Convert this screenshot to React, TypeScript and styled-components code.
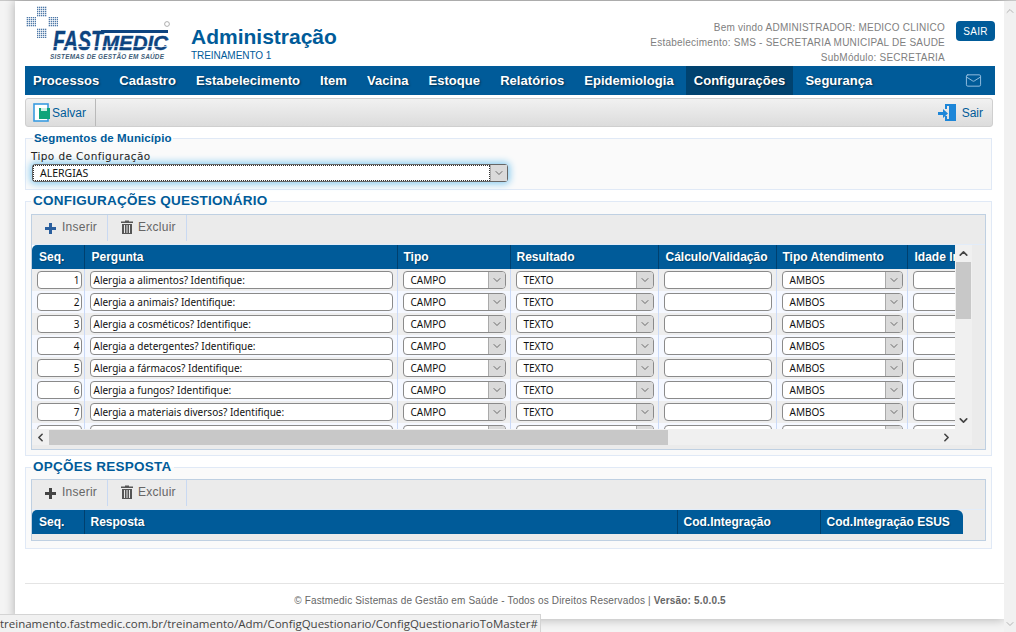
import React from "react";
import styled, { createGlobalStyle } from "styled-components";
import { ChevronDown, ChevronUp, ChevronLeft, ChevronRight, Mail } from "lucide-react";

const BLUE = "#005b99";
const Global = createGlobalStyle`
  html, body { margin: 0; padding: 0; height: 632px; overflow: hidden; background: #f4f4f4; }
  * { box-sizing: border-box; }
  body { font-family: "Liberation Sans", Arial, sans-serif; }
`;
const Shell = styled.div`
  position: relative; display: flex; width: 1016px; height: 632px;
  border-top: 1px solid #c8c8c8; background: #f4f4f4;
`;
const Gutter = styled.div`width: 15px; flex: none;`;
const Page = styled.main`
  width: 989px; height: 618px; flex: none; background: #fff; padding-left: 10px;
  box-shadow: 0 0 10px rgba(0,0,0,.3); position: relative; display: flex; flex-direction: column;
`;
const PageScroll = styled.div`
  width: 12px; flex: none; background: #f1f1f1; display: flex; flex-direction: column;
  justify-content: space-between; align-items: center; padding: 4px 0 2px; color: #b5b5b5; position: relative;
`;
const Head = styled.header`display: flex; width: 970px; height: 65px; flex: none;`;
const LogoBox = styled.div`width: 166px; flex: none; padding-top: 4px;`;
const TitleBox = styled.div`flex: 1; padding-top: 24px;`;
const Title = styled.h1`margin: 0; font-size: 21px; line-height: 24px; font-weight: 700; color: ${BLUE};`;
const Sub = styled.div`font-size: 10px; line-height: 12px; margin-top: 1px; color: ${BLUE}; letter-spacing: -.05px;`;
const Who = styled.div`
  padding-top: 19px; text-align: right; font-size: 10px; line-height: 15px; color: #808080; letter-spacing: .23px;
`;
const HeadBtn = styled.button`
  width: 39px; height: 20px; margin: 20px 0 0 11px; border: 0; border-radius: 4px; background: ${BLUE};
  color: #fff; font: 10px "Liberation Sans", sans-serif; letter-spacing: .3px; padding: 0;
`;
const Nav = styled.nav`
  width: 970px; height: 29px; flex: none; background: ${BLUE}; display: flex; gap: 4px; align-items: stretch; position: relative;
`;
const NavItem = styled.a<{ $active?: boolean }>`
  padding: 0 8px; line-height: 29px; font-size: 13px; letter-spacing: .05px; font-weight: 700; color: #fff;
  text-shadow: 1px 1px 2px rgba(0,0,0,.5); background: ${p => (p.$active ? "#00426f" : "transparent")};
`;
const NavMail = styled.span`margin-left: auto; padding: 6px 13px 0 0; color: #9cc4e4; line-height: 0;`;
const ActionBar = styled.div`
  width: 968px; height: 29px; flex: none; margin-top: 3px; display: flex; align-items: center; justify-content: space-between;
  border: 1px solid #cfcfcf; border-radius: 3px; background: linear-gradient(#f1f1f1, #dcdcdc);
`;
const ActionBtn = styled.span<{ $sep?: boolean }>`
  height: 100%; display: flex; align-items: center; gap: 1px; padding: 0 9px 0 7px; color: ${BLUE}; font-size: 12px;
  border-right: ${p => (p.$sep ? "1px solid #b9b9b9" : "0")};
`;
const Sets = styled.fieldset<{ $h: number; $mt: number }>`
  width: 967px; height: ${p => p.$h}px; flex: none; margin: ${p => p.$mt}px 0 0; padding: 0 5px; min-width: 0;
  background: #fafafa; border: 1px solid #e0e9f6; position: relative;
`;
const Legend = styled.legend<{ $big?: boolean }>`
  padding: 0 ${p => (p.$big ? "2px" : "1px")}; margin-left: ${p => (p.$big ? "0" : "2px")}; color: ${BLUE}; font-weight: 700;
  font-size: ${p => (p.$big ? "13.5px" : "11.500px")}; line-height: ${p => (p.$big ? "14px" : "13px")};
  letter-spacing: ${p => (p.$big ? ".25px" : ".1px")};
`;
const FieldLabel = styled.div`
  font: 10.5px/13px "DejaVu Sans", sans-serif; color: #222; letter-spacing: .4px; margin-top: 5px;
`;
const FocusSelect = styled.div`
  width: 476px; height: 18px; margin: 1px 0 0 1px; display: flex; border-radius: 3px; background: #fff;
  border: 1px solid #666; box-shadow: 0 0 7px 2px #8ccdf0; 
`;
const FocusText = styled.span`
  flex: 1; outline: 1px dotted #333; outline-offset: -1px; font: 10.5px/16px "Noto Sans", sans-serif; padding-left: 7px; color: #111;
`;
const Arrow = styled.span`
  width: 17px; flex: none; display: flex; align-items: center; justify-content: center; background: #dadada; color: #444;
  border-left: 1px solid #aaa;
`;
const Grid = styled.section<{ $h: number; $mt: number }>`
  height: ${p => p.$h}px; margin-top: ${p => p.$mt}px; border: 1px solid #bfd0e2; background: #ebebeb; display: flex; flex-direction: column;
`;
const Tools = styled.div<{ $h: number }>`
  height: ${p => p.$h}px; flex: none; display: flex; align-items: flex-start; border-bottom: 1px solid #e2ecf9;
`;
const Tool = styled.span`
  display: flex; align-items: center; gap: 6px; height: 26px; padding: 0 10px 3px 13px; font-size: 12px; color: #666;
  letter-spacing: .25px; border-right: 1px solid #c9d9f2;
`;
const ScrollRow = styled.div`display: flex; height: 184px; flex: none;`;
const Viewport = styled.div`width: 923px; overflow: hidden; height: 184px; background: #fff;`;
const Table = styled.table<{ $w: number }>`
  width: ${p => p.$w}px; table-layout: fixed; border-collapse: collapse; border-spacing: 0;
`;
const HeadCell = styled.th<{ $w: number; $round?: string; $pad?: number }>`
  width: ${p => p.$w}px; height: 24px; padding: 0 0 0 ${p => p.$pad ?? 6}px; background: ${BLUE}; color: #fff; text-align: left;
  font-size: 12px; font-weight: 700; border-left: 1px solid #00406e; white-space: nowrap; overflow: hidden;
  text-shadow: 1px 1px 1px rgba(0,0,0,.3);
  &:first-child { border-left: 0; border-top-left-radius: 5px; }
  ${p => (p.$round ? `border-top-right-radius: ${p.$round};` : "")}
`;
const Row = styled.tr<{ $odd: boolean }>`background: ${p => (p.$odd ? "#eeeeee" : "#f5f8ff")};`;
const Cell = styled.td`
  height: 22px; padding: 0 4px 0 5px; border-left: 1px solid #c9d9f7; vertical-align: middle;
  &:first-child { border-left: 0; padding: 0 2px 0 5px; }
`;
const Input = styled.div<{ $right?: boolean }>`
  height: 18px; background: #fff; border: 1px solid #8a8a8a; border-radius: 4px; overflow: hidden; white-space: nowrap;
  font: 10px/16px "Noto Sans", sans-serif; color: #111; padding: 0 ${p => (p.$right ? "1px" : "3px")};
  text-align: ${p => (p.$right ? "right" : "left")};
`;
const Sel = styled.div`
  height: 18px; display: flex; background: #fff; border: 1px solid #8a8a8a; border-radius: 4px; overflow: hidden;
`;
const SelText = styled.span`flex: 1; padding-left: 7px; font: 10px/17px "Noto Sans", sans-serif; color: #111;`;
const VBar = styled.div`
  width: 17px; flex: none; background: #f0f0f0; display: flex; flex-direction: column; align-items: center; color: #444;
`;
const VBtn = styled.div`height: 17px; display: flex; align-items: center; justify-content: center;`;
const VThumb = styled.div`width: 15px; height: 57px; background: #c8c8c8;`;
const VRest = styled.div`flex: 1;`;
const HBar = styled.div`
  height: 16px; width: 940px; flex: none; background: #f0f0f0; display: flex; align-items: center; color: #444;
`;
const HBtn = styled.div`width: 17px; height: 16px; display: flex; align-items: center; justify-content: center;`;
const HThumb = styled.div`width: 619px; height: 15px; background: #c8c8c8;`;
const HRest = styled.div`flex: 1;`;
const Footer = styled.footer`
  margin-top: 34px; flex: none; border-top: 1px solid #e4e4e4; height: 36px; padding-top: 11px; width: 979px;
  font-size: 10px; line-height: 12px; color: #666; text-align: center; letter-spacing: .17px; padding-right: 9px;
`;
const Status = styled.div`
  position: absolute; left: 0; bottom: 0; width: 541px; height: 18px; background: #f1f1f1; border: 1px solid #d4d4d4;
  border-left: 0; border-bottom: 0; font: 11.5px/17px "Open Sans", sans-serif; color: #444; white-space: nowrap; overflow: hidden;
`;

const Logo = () => (
  <svg width="150" height="58" viewBox="0 0 150 58">
    <defs>
      <pattern id="dots" width="2" height="2" patternUnits="userSpaceOnUse">
        <rect width="1.3" height="1.3" fill="#4d78a8" />
      </pattern>
    </defs>
    <rect x="12" y="1" width="10" height="11" fill="url(#dots)" />
    <rect x="1" y="12" width="10" height="10" fill="url(#dots)" />
    <rect x="23" y="12" width="10" height="10" fill="url(#dots)" />
    <rect x="12" y="23" width="10" height="10" fill="url(#dots)" />
    <rect x="76" y="25" width="67" height="3" fill="#0d4480" />
    <text x="28" y="45" fontFamily="Liberation Sans" fontWeight="700" fontStyle="italic" fontSize="27" fill="#0d4480" stroke="#0d4480" strokeWidth=".4" textLength="50" lengthAdjust="spacingAndGlyphs">FAST</text>
    <text x="77" y="45" fontFamily="Liberation Sans" fontWeight="700" fontStyle="italic" fontSize="21" fill="#0d4480" stroke="#0d4480" strokeWidth=".4" textLength="66" lengthAdjust="spacingAndGlyphs">MEDIC</text>
    <rect x="28" y="41" width="115" height=".7" fill="#fff" />
    <text x="25" y="54" fontFamily="Liberation Sans" fontWeight="700" fontStyle="italic" fontSize="6.4" fill="#3e5c78" textLength="114">SISTEMAS DE GESTÃO EM SAÚDE</text>
    <circle cx="142" cy="19" r="2.4" fill="none" stroke="#9a9a9a" strokeWidth=".8" />
  </svg>
);
const SaveIcon = () => (
  <svg width="18" height="19" viewBox="0 0 18 19">
    <rect x="1" y="1" width="14" height="17" fill="#fff" stroke="#3a9be0" strokeWidth="1.6" />
    <rect x="6" y="5" width="11" height="11" fill="#0fa37a" />
    <rect x="8" y="5" width="6" height="3" fill="#cdeee3" />
  </svg>
);
const ExitIcon = () => (
  <svg width="20" height="20" viewBox="0 0 20 20">
    <path d="M8 1h11v17h-11v-5h2v3h7V3h-7v3H8z" fill="#1d86d8" />
    <path d="M12 3l6-1v16l-6-2z" fill="#1d86d8" />
    <path d="M1 9h5V6l5 4.5-5 4.500V12H1z" fill="#1d86d8" />
  </svg>
);
const PlusIcon = ({ c }: { c: string }) => (
  <svg width="11" height="11" viewBox="0 0 11 11" style={{ marginTop: 4 }}>
    <path d="M4 0h3v4h4v3H7v4H4V7H0V4h4z" fill={c} />
  </svg>
);
const TrashIcon = () => (
  <svg width="12" height="14" viewBox="0 0 12 14" style={{ marginRight: -1 }}>
    <path d="M4 1.500V0.500h4v1h4v1.500H0V1.500z M1 4h10v10H1z" fill="#555" />
    <path d="M3.500 5v8M6 5v8M8.500 5v8" stroke="#e8e8e8" strokeWidth="1" />
  </svg>
);

const questions = [
  "Alergia a alimentos? Identifique:", "Alergia a animais? Identifique:", "Alergia a cosméticos? Identifique:",
  "Alergia a detergentes? Identifique:", "Alergia a fármacos? Identifique:", "Alergia a fungos? Identifique:",
  "Alergia a materiais diversos? Identifique:", "",
];
const Select = ({ v }: { v: string }) => (
  <Sel>
    <SelText>{v}</SelText>
    <Arrow><ChevronDown size={12} strokeWidth={1.5} /></Arrow>
  </Sel>
);
const Toolbar = ({ plus, h }: { plus: string; h: number }) => (
  <Tools $h={h}>
    <Tool><PlusIcon c={plus} />Inserir</Tool>
    <Tool><TrashIcon />Excluir</Tool>
  </Tools>
);

export default function App() {
  const nav = ["Processos","Cadastro","Estabelecimento","Item","Vacina","Estoque","Relatórios","Epidemiologia","Configurações","Segurança"];
  return (
    <Shell>
      <Global />
      <Gutter />
      <Page>
        <Head>
          <LogoBox><Logo /></LogoBox>
          <TitleBox>
            <Title>Administração</Title>
            <Sub>TREINAMENTO 1</Sub>
          </TitleBox>
          <Who>
            Bem vindo ADMINISTRADOR: MEDICO CLINICO<br />
            Estabelecimento: SMS - SECRETARIA MUNICIPAL DE SAUDE<br />
            SubMódulo: SECRETARIA
          </Who>
          <HeadBtn>SAIR</HeadBtn>
        </Head>
        <Nav>
          {nav.map(n => <NavItem key={n} $active={n === "Configurações"}>{n}</NavItem>)}
          <NavMail><Mail size={17} strokeWidth={1.3} /></NavMail>
        </Nav>
        <ActionBar>
          <ActionBtn $sep><SaveIcon />Salvar</ActionBtn>
          <ActionBtn><ExitIcon />&nbsp;Sair</ActionBtn>
        </ActionBar>
        <Sets $h={58} $mt={5}>
          <Legend>Segmentos de Município</Legend>
          <FieldLabel>Tipo de Configuração</FieldLabel>
          <FocusSelect>
            <FocusText>ALERGIAS</FocusText>
            <Arrow><ChevronDown size={12} strokeWidth={1.5} /></Arrow>
          </FocusSelect>
        </Sets>
        <Sets $h={262} $mt={4}>
          <Legend $big>CONFIGURAÇÕES QUESTIONÁRIO</Legend>
          <Grid $h={236} $mt={6}>
            <Toolbar plus="#2a5f9e" h={30} />
            <ScrollRow>
              <Viewport>
                <Table $w={1100}>
                  <thead>
                    <tr>
                      <HeadCell $w={52} $pad={7}>Seq.</HeadCell>
                      <HeadCell $w={313} $pad={7}>Pergunta</HeadCell>
                      <HeadCell $w={113}>Tipo</HeadCell>
                      <HeadCell $w={148}>Resultado</HeadCell>
                      <HeadCell $w={118} $pad={7}>Cálculo/Validação</HeadCell>
                      <HeadCell $w={131}>Tipo Atendimento</HeadCell>
                      <HeadCell $w={225} $pad={7}>Idade Inicial</HeadCell>
                    </tr>
                  </thead>
                  <tbody>
                    {questions.map((q, i) => (
                      <Row key={i} $odd={i % 2 === 0}>
                        <Cell><Input $right>{q ? i + 1 : ""}</Input></Cell>
                        <Cell><Input>{q}</Input></Cell>
                        <Cell><Select v="CAMPO" /></Cell>
                        <Cell><Select v="TEXTO" /></Cell>
                        <Cell><Input /></Cell>
                        <Cell><Select v="AMBOS" /></Cell>
                        <Cell><Input /></Cell>
                      </Row>
                    ))}
                  </tbody>
                </Table>
              </Viewport>
              <VBar>
                <VBtn><ChevronUp size={13} strokeWidth={3} /></VBtn>
                <VThumb />
                <VRest />
                <VBtn><ChevronDown size={13} strokeWidth={3} /></VBtn>
              </VBar>
            </ScrollRow>
            <HBar>
              <HBtn><ChevronLeft size={13} strokeWidth={3} /></HBtn>
              <HThumb />
              <HRest />
              <HBtn><ChevronRight size={13} strokeWidth={3} /></HBtn>
              <HBtn />
            </HBar>
          </Grid>
        </Sets>
        <Sets $h={89} $mt={4}>
          <Legend $big>OPÇÕES RESPOSTA</Legend>
          <Grid $h={62} $mt={5}>
            <Toolbar plus="#444" h={30} />
            <Table $w={931}>
              <thead>
                <tr>
                  <HeadCell $w={52} $pad={7}>Seq.</HeadCell>
                  <HeadCell $w={593}>Resposta</HeadCell>
                  <HeadCell $w={143}>Cod.Integração</HeadCell>
                  <HeadCell $w={143} $round="6px">Cod.Integração ESUS</HeadCell>
                </tr>
              </thead>
            </Table>
          </Grid>
        </Sets>
        <Footer>
          © Fastmedic Sistemas de Gestão em Saúde - Todos os Direitos Reservados | <b>Versão: 5.0.0.5</b>
        </Footer>
      </Page>
      <PageScroll>
        <ChevronUp size={12} />
        <ChevronDown size={12} />
      </PageScroll>
      <Status>treinamento.fastmedic.com.br/treinamento/Adm/ConfigQuestionario/ConfigQuestionarioToMaster#</Status>
    </Shell>
  );
}
